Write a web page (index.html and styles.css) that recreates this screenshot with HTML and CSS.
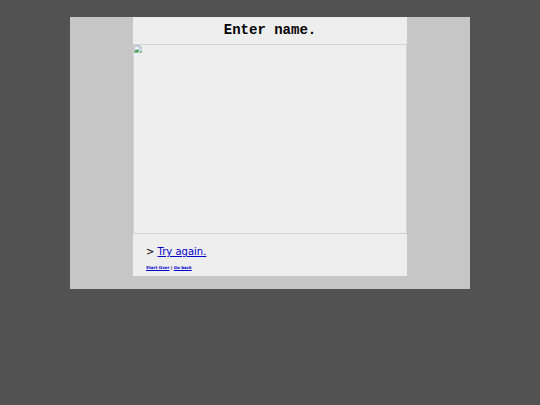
FILE: index.html
```html
<!DOCTYPE html>
<html lang="en">
<head>
  <meta charset="UTF-8">
  <meta name="viewport" content="width=device-width, initial-scale=1.0">
  <title>Enter name.</title>
  <link rel="stylesheet" href="styles.css">
</head>
<body>
  <div class="container">
    <div class="page">
      <h1>Enter name.</h1>
      <div class="panel">
        <svg class="missing" viewBox="0 0 16 16" aria-hidden="true">
          <path d="M1 1h10l4 4v10H1z" fill="#c3d5ef" stroke="#a3a8ae"/>
          <path d="M11 1v4h4z" fill="#fff" stroke="#a3a8ae"/>
          <path d="M3 8a2 2 0 0 1 3-3 2 2 0 0 1 3 3z" fill="#fff"/>
          <path d="M1 15v-3l5-3 5 3 4-1v4z" fill="#4ca64c"/>
          <path d="M7 16l9-8v2l-6 6z" fill="#eee"/>
        </svg>
      </div>
      <div class="commands">
        <p>&gt; <a href="#">Try again.</a></p>
        <p class="small"><a href="#">Start Over</a> | <a href="#">Go back</a></p>
      </div>
    </div>
  </div>
</body>
</html>
```

FILE: styles.css
```css
* {
  box-sizing: border-box;
}

body {
  margin: 0;
  padding: 17px;
  background: #525252;
  color: #000;
  font-family: "DejaVu Sans", Verdana, sans-serif;
}

.container {
  max-width: 400px;
  margin: 0 auto;
  padding: 0 63px 13px;
  background: #c6c6c6;
}

.page {
  background: #eee;
}

h1 {
  margin: 0;
  padding: 5px 0 6px;
  font: bold 14px/16px "Courier New", "Liberation Mono", monospace;
  text-align: center;
}

.panel {
  height: 190px;
  border: 1px solid #d2d2d2;
}

.missing {
  display: block;
  width: 8px;
  height: 8px;
}

.commands {
  padding: 11px 13px 6px;
}

p {
  margin: 0 0 7px;
  font-size: 10px;
  line-height: 14px;
}

.small {
  margin: 0;
  font-size: 4px;
  font-weight: bold;
  line-height: 4px;
}

a {
  color: #0000cc;
}
```
